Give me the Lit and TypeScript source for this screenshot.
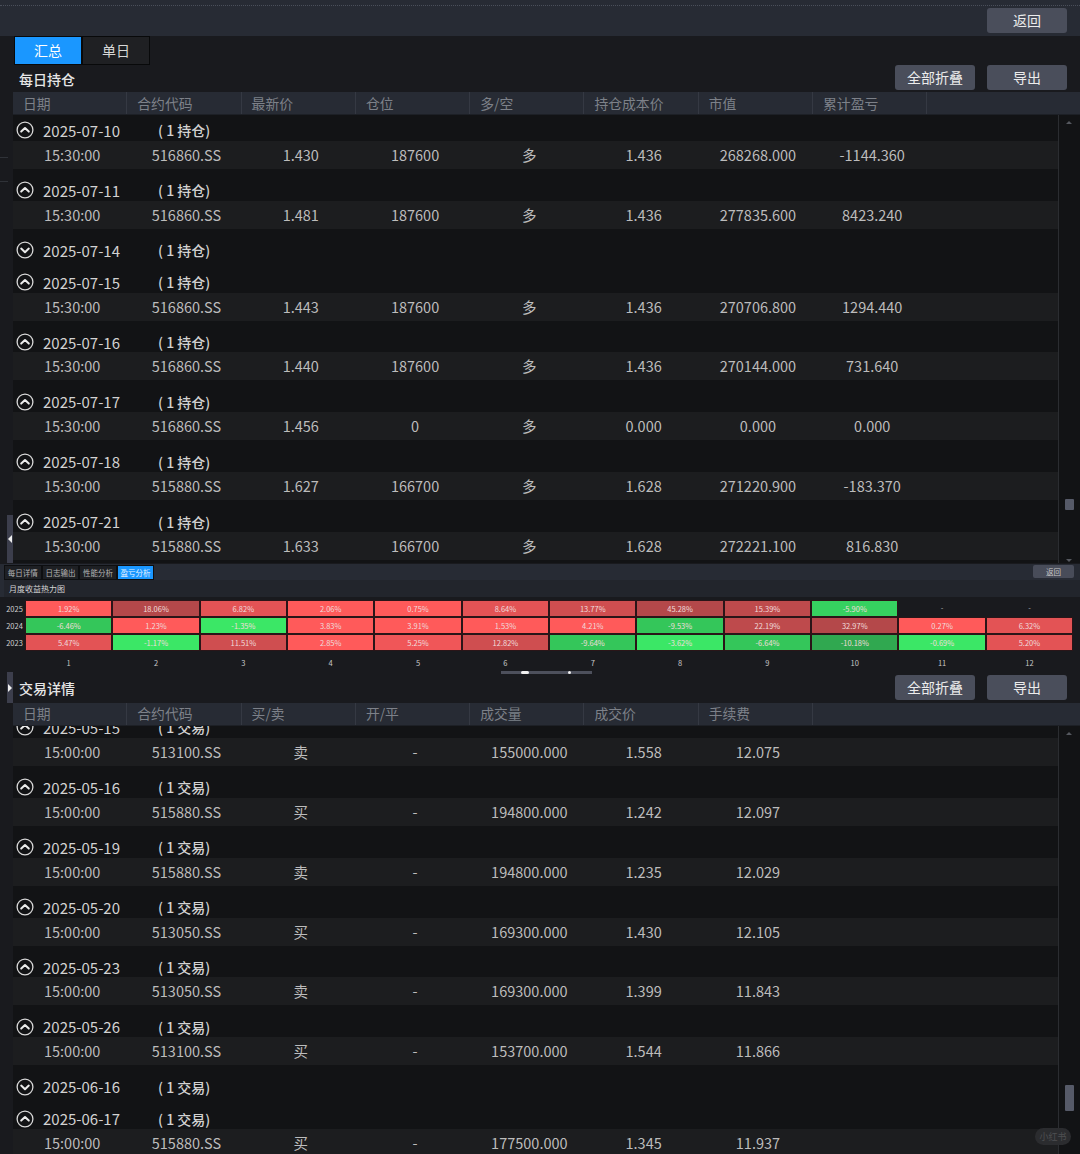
import { LitElement, html, css, svg } from "lit";
import { customElement } from "lit/decorators.js";

type Group = { d: string; open: boolean; row?: string[] };

const hold = (p: string[]) => ["15:30:00", ...p];
const topGroups: Group[] = [
  { d: "2025-07-10", open: true, row: hold(["516860.SS", "1.430", "187600", "多", "1.436", "268268.000", "-1144.360"]) },
  { d: "2025-07-11", open: true, row: hold(["516860.SS", "1.481", "187600", "多", "1.436", "277835.600", "8423.240"]) },
  { d: "2025-07-14", open: false },
  { d: "2025-07-15", open: true, row: hold(["516860.SS", "1.443", "187600", "多", "1.436", "270706.800", "1294.440"]) },
  { d: "2025-07-16", open: true, row: hold(["516860.SS", "1.440", "187600", "多", "1.436", "270144.000", "731.640"]) },
  { d: "2025-07-17", open: true, row: hold(["516860.SS", "1.456", "0", "多", "0.000", "0.000", "0.000"]) },
  { d: "2025-07-18", open: true, row: hold(["515880.SS", "1.627", "166700", "多", "1.628", "271220.900", "-183.370"]) },
  { d: "2025-07-21", open: true, row: hold(["515880.SS", "1.633", "166700", "多", "1.628", "272221.100", "816.830"]) },
];
const trade = (p: string[]) => ["15:00:00", ...p];
const bottomGroups: Group[] = [
  { d: "2025-05-15", open: true, row: trade(["513100.SS", "卖", "-", "155000.000", "1.558", "12.075"]) },
  { d: "2025-05-16", open: true, row: trade(["515880.SS", "买", "-", "194800.000", "1.242", "12.097"]) },
  { d: "2025-05-19", open: true, row: trade(["515880.SS", "卖", "-", "194800.000", "1.235", "12.029"]) },
  { d: "2025-05-20", open: true, row: trade(["513050.SS", "买", "-", "169300.000", "1.430", "12.105"]) },
  { d: "2025-05-23", open: true, row: trade(["513050.SS", "卖", "-", "169300.000", "1.399", "11.843"]) },
  { d: "2025-05-26", open: true, row: trade(["513100.SS", "买", "-", "153700.000", "1.544", "11.866"]) },
  { d: "2025-06-16", open: false },
  { d: "2025-06-17", open: true, row: trade(["515880.SS", "买", "-", "177500.000", "1.345", "11.937"]) },
];

const R0 = "#ff5a5a", R1 = "#f05658", R2 = "#e35355", R3 = "#cf4e50", R4 = "#be4a4c", R5 = "#b4484a";
const G0 = "#3be766", G1 = "#36d160", G2 = "#34c65a", G3 = "#30a850";
const heat: { y: string; c: [string, string | null][] }[] = [
  { y: "2025", c: [["1.92%", R0], ["18.06%", R5], ["6.82%", R2], ["2.06%", R0], ["0.75%", R0], ["8.64%", R2], ["13.77%", R3], ["45.28%", R5], ["15.39%", R4], ["-5.90%", G1], ["-", null], ["-", null]] },
  { y: "2024", c: [["-6.46%", G2], ["1.23%", R0], ["-1.35%", G0], ["3.83%", R0], ["3.91%", R0], ["1.53%", R0], ["4.21%", R0], ["-9.53%", G2], ["22.19%", R4], ["32.97%", R5], ["0.27%", R0], ["6.32%", R2]] },
  { y: "2023", c: [["5.47%", R2], ["-1.17%", G0], ["11.51%", R3], ["2.85%", R0], ["5.25%", R1], ["12.82%", R3], ["-9.64%", G2], ["-3.62%", G0], ["-6.64%", G2], ["-10.18%", G3], ["-0.69%", G0], ["5.20%", R2]] },
];

const chevron = (open: boolean) => svg`<svg class="ico" viewBox="0 0 18 18" width="18" height="18">
  <circle cx="9" cy="9" r="7.9" fill="none" stroke="#d8d8d8" stroke-width="1.3"></circle>
  <path d="${open ? "M5.2 10.6 9 7l3.8 3.6" : "M5.2 7.6 9 11.2l3.8-3.6"}" fill="none" stroke="#ececec" stroke-width="2" stroke-linecap="round" stroke-linejoin="round"></path>
</svg>`;

@customElement("app-root")
export class AppRoot extends LitElement {
  static styles = css`
    :host {
      display: block;
      width: 1080px;
      height: 1154px;
      overflow: hidden;
      position: relative;
      background: #191a1e;
      color: #c9c9c9;
      font-family: "Noto Sans CJK SC", "Noto Sans", sans-serif;
    }
    * { box-sizing: border-box; }
    .page { display: flex; flex-direction: column; height: 1154px; }

    .topbar {
      height: 36px;
      flex: none;
      background: #272b34;
      display: flex;
      flex-direction: column;
    }
    .dots { height: 1px; margin-top: 5px; border-top: 1px dotted #4a4f5a; }
    .topbar-row { display: flex; justify-content: flex-end; padding: 2px 13px 0 0; }

    .btn {
      width: 80px;
      height: 25px;
      border-radius: 3px;
      background: #4a4e5b;
      color: #ececec;
      font-size: 14px;
      line-height: 25px;
      text-align: center;
    }
    .btns { display: flex; gap: 12px; }

    .tabs { display: flex; height: 28px; flex: none; margin-left: 14px; }
    .tab {
      width: 68px;
      height: 29px;
      border: 1px solid #08090a;
      background: #1f2023;
      color: #d8d8d8;
      font-size: 14px;
      line-height: 27px;
      text-align: center;
    }
    .tab.on { background: #1a97ff; color: #fff; }

    .titlerow {
      flex: none;
      height: 28px;
      display: flex;
      justify-content: space-between;
      padding: 1px 13px 0 19px;
    }
    .title { font-size: 14px; line-height: 28px; color: #e6e6e6; font-weight: 500; }

    .thead {
      flex: none;
      height: 23px;
      margin-left: 13px;
      background: #272b34;
      display: flex;
      border-bottom: 1px solid #1d2026;
    }
    .th {
      width: 114.3px;
      padding-left: 10px;
      font-size: 13.8px;
      line-height: 23px;
      color: #7d8189;
      border-right: 1px solid #353943;
    }
    .bottom .th { line-height: 20px; }

    .tbody {
      flex: 1;
      min-height: 0;
      margin-left: 13px;
      display: flex;
      background: #121315;
      overflow: hidden;
    }
    .list { width: 1045px; flex: none; }
    .group { margin-bottom: 6px; }
    .group.first-cut { margin-top: -14px; }
    .date {
      height: 25.9px;
      padding-top: 5px;
      display: flex;
      align-items: center;
      font-size: 15px;
      color: #d2d2d2;
    }
    .ico { flex: none; margin-left: 3px; }
    .d { margin-left: 9px; width: 115px; }
    .c { font-size: 14px; font-weight: 500; }
    .row {
      height: 28px;
      background: #1c1d1f;
      display: grid;
      grid-template-columns: repeat(8, 114.3px);
      font-size: 14.5px;
      line-height: 28px;
      color: #bcbcbc;
      text-align: center;
    }
    .cell { padding-left: 4px; }

    .sbar {
      width: 20px;
      flex: none;
      border-left: 1px solid #2b2d31;
      display: flex;
      flex-direction: column;
      align-items: center;
      position: relative;
    }
    .thumb { width: 9px; background: #565a68; border-radius: 1px; margin-left: 2px; flex: none; }
    .arrow { width: 0; height: 0; margin: 6px 0 0 1px; flex: none; border: 3px solid transparent; border-bottom: 3px solid #55585f; border-top: 0; }

    .top { height: 563px; flex: none; display: flex; flex-direction: column; }
    .top .tbody { flex: 1; }

    .mid { flex: none; height: 112px; display: flex; flex-direction: column; padding-left: 4px; background: #191a1e; }
    .midbar { height: 33px; flex: none; margin-top: 1px; background: #272b34; margin-left: -4px; padding-left: 4px; display: flex; flex-direction: column; }
    .midtabs { display: flex; height: 16px; flex: none; justify-content: space-between; padding: 1px 6px 0 0; }
    .mt { display: flex; }
    .mtab {
      width: 37.6px;
      height: 15px;
      border: 1px solid #0e0f11;
      background: #1e2024;
      color: #b4b4b4;
      font-size: 7.5px;
      line-height: 13px;
      text-align: center;
    }
    .mtab.on { background: #1a97ff; color: #e8f4ff; }
    .minibtn {
      width: 41px;
      height: 13px;
      background: #484c59;
      border-radius: 2px;
      color: #c8c8c8;
      font-size: 7.5px;
      line-height: 13px;
      text-align: center;
    }
    .midtitle { flex: 1; background: #22252c; font-size: 8px; line-height: 17px; padding-left: 5px; color: #d4d4d4; }

    .heat {
      display: grid;
      grid-template-columns: 21px repeat(12, 87.35px);
      grid-auto-rows: 17.2px;
      padding-top: 2.5px;
      flex: none;
    }
    .yl { font-size: 7.5px; line-height: 17px; color: #d0d0d0; text-align: center; }
    .hc {
      font-size: 7.5px;
      line-height: 16px;
      text-align: center;
      color: #f0dcdc;
      border: 0.7px solid #2a1518;
    }
    .hc.none { border: none; color: #b4b4b4; }
    .xl { font-size: 7.5px; line-height: 10px; color: #c8c8c8; text-align: center; padding-top: 7px; }

    .zoombar {
      width: 91px;
      height: 3px;
      margin: 3px 0 0 497px;
      background: #4d505c;
      display: flex;
      align-items: center;
      padding-left: 20px;
      gap: 39px;
      flex: none;
    }
    .zoombar i { display: block; height: 3px; background: #f0f0f0; border-radius: 2px; }

    .bottom { flex: 1; min-height: 0; display: flex; flex-direction: column; }
    .bottom .titlerow { height: 28px; padding-top: 0; }
    .bottom .title { line-height: 27px; }

    .handle {
      position: absolute;
      left: 7px;
      width: 6px;
      background: #3c3e4c;
      display: flex;
      align-items: center;
      justify-content: center;
    }
    .tri { width: 0; height: 0; border: 4px solid transparent; }
    .tri.l { border-right: 4px solid #eee; border-left: 0; }
    .tri.r { border-left: 4px solid #eee; border-right: 0; }
    .tick { position: absolute; left: 0; width: 8px; height: 1px; background: #2f3238; }

    .mark {
      position: absolute;
      left: 1035px;
      top: 1128px;
      width: 36px;
      height: 17px;
      border-radius: 9px;
      background: #2b2c2f;
      color: #4e4f52;
      font-size: 9px;
      line-height: 17px;
      text-align: center;
    }
  `;

  private groups(list: Group[], unit: string, cut: boolean) {
    return list.map(
      (g, i) => html`<div class="group ${cut && i === 0 ? "first-cut" : ""}">
        <div class="date">${chevron(g.open)}<span class="d">${g.d}</span><span class="c">( 1 ${unit})</span></div>
        ${g.row ? html`<div class="row">${g.row.map((v) => html`<span class="cell">${v}</span>`)}</div>` : ""}
      </div>`
    );
  }

  private head(cols: string[]) {
    return html`<div class="thead">${cols.map((c) => html`<div class="th">${c}</div>`)}</div>`;
  }

  private scroll(top: number, h: number, tail: boolean) {
    return html`<div class="sbar">
      <div class="arrow"></div>
      <div class="thumb" style="margin-top:${top}px;height:${h}px"></div>
      ${tail ? html`<div class="arrow" style="margin-top:49px;transform:rotate(180deg)"></div>` : ""}
    </div>`;
  }

  render() {
    return html`<div class="page">
      <div class="top">
        <div class="topbar">
          <div class="dots"></div>
          <div class="topbar-row"><div class="btn">返回</div></div>
        </div>
        <div class="tabs"><div class="tab on">汇总</div><div class="tab">单日</div></div>
        <div class="titlerow">
          <div class="title">每日持仓</div>
          <div class="btns"><div class="btn">全部折叠</div><div class="btn">导出</div></div>
        </div>
        ${this.head(["日期", "合约代码", "最新价", "仓位", "多/空", "持仓成本价", "市值", "累计盈亏"])}
        <div class="tbody">
          <div class="list">${this.groups(topGroups, "持仓", false)}</div>
          ${this.scroll(375, 11, true)}
        </div>
      </div>

      <div class="mid">
        <div class="midbar">
          <div class="midtabs">
            <div class="mt">
              <div class="mtab">每日详情</div><div class="mtab">日志输出</div><div class="mtab">性能分析</div><div class="mtab on">盈亏分析</div>
            </div>
            <div class="minibtn">返回</div>
          </div>
          <div class="midtitle">月度收益热力图</div>
        </div>
        <div class="heat">
          ${heat.map(
            (r) => html`<div class="yl">${r.y}</div>${r.c.map(
              ([t, bg]) => html`<div class="hc ${bg ? "" : "none"}" style="${bg ? `background:${bg}` : ""}">${t}</div>`
            )}`
          )}
          <div></div>
          ${Array.from({ length: 12 }, (_, i) => html`<div class="xl">${i + 1}</div>`)}
        </div>
        <div class="zoombar"><i style="width:8px"></i><i style="width:3px"></i></div>
      </div>

      <div class="bottom">
        <div class="titlerow">
          <div class="title">交易详情</div>
          <div class="btns"><div class="btn">全部折叠</div><div class="btn">导出</div></div>
        </div>
        ${this.head(["日期", "合约代码", "买/卖", "开/平", "成交量", "成交价", "手续费"])}
        <div class="tbody">
          <div class="list">${this.groups(bottomGroups, "交易", true)}</div>
          ${this.scroll(350, 26, false)}
        </div>
      </div>
    </div>
    <div class="tick" style="top:181px"></div>
    <div class="tick" style="top:157px"></div>
    <div class="handle" style="top:515px;height:48px"><div class="tri l"></div></div>
    <div class="handle" style="top:672px;height:31px"><div class="tri r"></div></div>
    <div class="mark">小红书</div>`;
  }
}
